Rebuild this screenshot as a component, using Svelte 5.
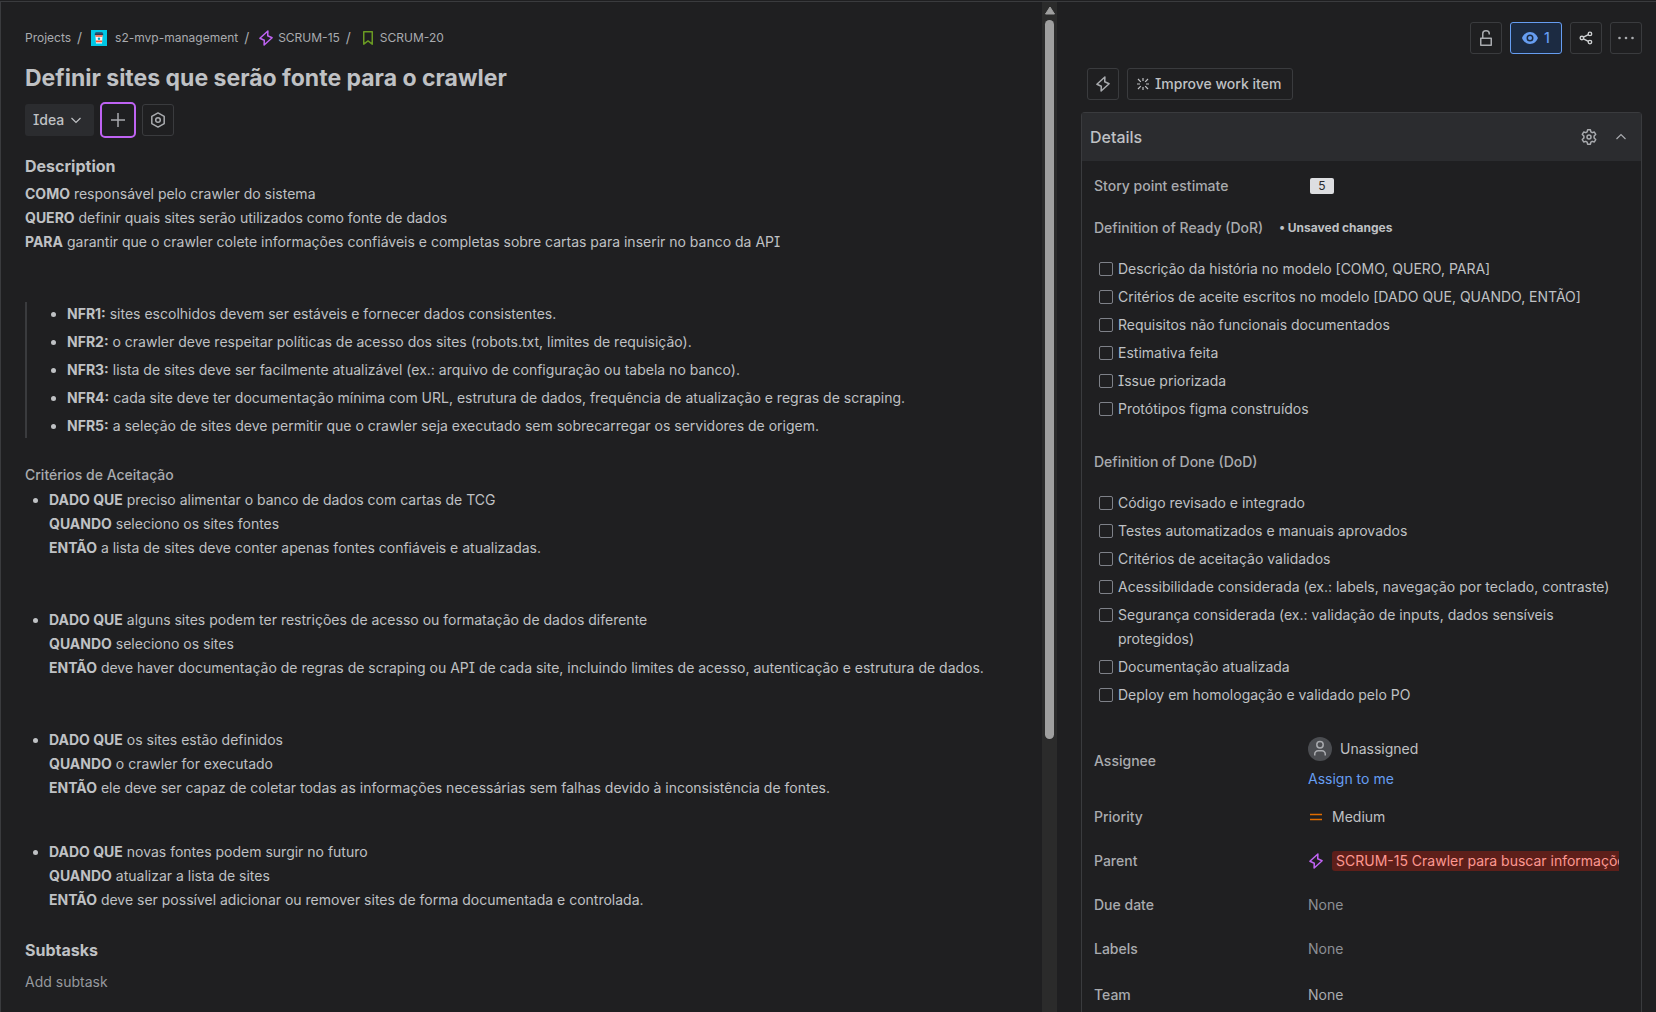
<script>
  const description = [
    ['COMO', 'responsável pelo crawler do sistema'],
    ['QUERO', 'definir quais sites serão utilizados como fonte de dados'],
    ['PARA', 'garantir que o crawler colete informações confiáveis e completas sobre cartas para inserir no banco da API']
  ];

  const requirements = [
    ['NFR1:', 'sites escolhidos devem ser estáveis e fornecer dados consistentes.'],
    ['NFR2:', 'o crawler deve respeitar políticas de acesso dos sites (robots.txt, limites de requisição).'],
    ['NFR3:', 'lista de sites deve ser facilmente atualizável (ex.: arquivo de configuração ou tabela no banco).'],
    ['NFR4:', 'cada site deve ter documentação mínima com URL, estrutura de dados, frequência de atualização e regras de scraping.'],
    ['NFR5:', 'a seleção de sites deve permitir que o crawler seja executado sem sobrecarregar os servidores de origem.']
  ];

  const criteria = [
    ['preciso alimentar o banco de dados com cartas de TCG', 'seleciono os sites fontes', 'a lista de sites deve conter apenas fontes confiáveis e atualizadas.'],
    ['alguns sites podem ter restrições de acesso ou formatação de dados diferente', 'seleciono os sites', 'deve haver documentação de regras de scraping ou API de cada site, incluindo limites de acesso, autenticação e estrutura de dados.'],
    ['os sites estão definidos', 'o crawler for executado', 'ele deve ser capaz de coletar todas as informações necessárias sem falhas devido à inconsistência de fontes.'],
    ['novas fontes podem surgir no futuro', 'atualizar a lista de sites', 'deve ser possível adicionar ou remover sites de forma documentada e controlada.']
  ];

  const ready = [
    'Descrição da história no modelo [COMO, QUERO, PARA]',
    'Critérios de aceite escritos no modelo [DADO QUE, QUANDO, ENTÃO]',
    'Requisitos não funcionais documentados',
    'Estimativa feita',
    'Issue priorizada',
    'Protótipos figma construídos'
  ];

  const done = [
    'Código revisado e integrado',
    'Testes automatizados e manuais aprovados',
    'Critérios de aceitação validados',
    'Acessibilidade considerada (ex.: labels, navegação por teclado, contraste)',
    'Segurança considerada (ex.: validação de inputs, dados sensíveis protegidos)',
    'Documentação atualizada',
    'Deploy em homologação e validado pelo PO'
  ];
</script>

{#snippet bolt()}
  <path d="M9.900 1 1.900 8.300 6.300 10.200 6.100 15 14.100 7.700 9.700 5.800Z" fill="none" stroke="currentColor" stroke-width="1.5" stroke-linejoin="round" />
{/snippet}

{#snippet epic()}
  <svg class="icon epic" viewBox="0 0 16 16" aria-hidden="true">{@render bolt()}</svg>
{/snippet}

{#snippet checklist(items)}
  <ul class="checklist">
    {#each items as item}
      <li>
        <label><input type="checkbox" /><span>{item}</span></label>
      </li>
    {/each}
  </ul>
{/snippet}

<div class="page">
  <main class="work-item">
    <div class="content">
      <nav class="breadcrumbs" aria-label="Breadcrumbs">
        <a href="#projects">Projects</a>
        <span class="slash">/</span>
        <a href="#project" class="project">
          <svg class="avatar" viewBox="0 0 16 16" aria-hidden="true">
            <rect width="16" height="16" fill="#00c7e5" />
            <path d="M4.6 2.200h6.800l.6 1.500H4z" fill="#344563" />
            <path d="M3.800 3.600h8.400v1.600H3.800z" fill="#253858" />
            <path d="M4.400 5.200h7.200L11 13.600H5z" fill="#f4f5f7" />
            <path d="M4.400 5.200h7.200l-.15 1.600h-6.900zM4.800 10.600h6.400l-.15 1.600h-6.100z" fill="#ff5630" />
            <circle cx="8" cy="8.700" r="1.200" fill="#00a3bf" />
          </svg>
          s2-mvp-management
        </a>
        <span class="slash">/</span>
        <a href="#SCRUM-15" class="issue">{@render epic()}SCRUM-15</a>
        <span class="slash">/</span>
        <a href="#SCRUM-20" class="issue">
          <svg class="icon story" viewBox="0 0 16 16" aria-hidden="true">
            <path d="M3.750 1.750h8.500v12.400L8 10.900l-4.250 3.250Z" fill="none" stroke="currentColor" stroke-width="1.5" stroke-linejoin="round" />
          </svg>SCRUM-20</a>
      </nav>

      <h1>Definir sites que serão fonte para o crawler</h1>

      <div class="toolbar">
        <button class="status" type="button">
          Idea
          <svg class="icon" viewBox="0 0 12 12" aria-hidden="true"><path d="m1.500 4 4.500 4.500L10.500 4" fill="none" stroke="currentColor" stroke-width="1.200" /></svg>
        </button>
        <button class="square add" type="button" aria-label="Add">
          <svg class="icon" viewBox="0 0 14 14" aria-hidden="true"><path d="M7 0v14M0 7h14" fill="none" stroke="currentColor" stroke-width="1.500" /></svg>
        </button>
        <button class="square" type="button" aria-label="Apps">
          <svg class="icon large" viewBox="0 0 16 16" aria-hidden="true">
            <path d="M8 .900 14.200 4.400v7.200L8 15.100 1.800 11.600V4.400Z" fill="none" stroke="currentColor" stroke-width="1.500" stroke-linejoin="round" />
            <circle cx="8" cy="8" r="2.300" fill="none" stroke="currentColor" stroke-width="1.500" />
          </svg>
        </button>
      </div>

      <h2>Description</h2>
      <div class="prose">
        {#each description as [lead, text]}
          <p><strong>{lead}</strong> {text}</p>
        {/each}
      </div>

      <blockquote>
        <ul>
          {#each requirements as [lead, text]}
            <li><strong>{lead}</strong> {text}</li>
          {/each}
        </ul>
      </blockquote>

      <h3>Critérios de Aceitação</h3>
      <ul class="criteria">
        {#each criteria as [given, when, then]}
          <li>
            <p><strong>DADO QUE</strong> {given}</p>
            <p><strong>QUANDO</strong> {when}</p>
            <p><strong>ENTÃO</strong> {then}</p>
          </li>
        {/each}
      </ul>

      <h2>Subtasks</h2>
      <button class="subtask" type="button">Add subtask</button>
    </div>

    <div class="scrollbar" aria-hidden="true">
      <svg viewBox="0 0 10 8"><path d="M5 .500 9.500 7.500H.500Z" fill="currentColor" stroke="currentColor" stroke-linejoin="round" /></svg>
      <div class="thumb"></div>
    </div>
  </main>

  <aside>
    <div class="actions">
      <button class="square" type="button" aria-label="Restrictions">
        <svg class="icon large" viewBox="0 0 16 16" aria-hidden="true">
          <path d="M2.750 8.250h10.500v7H2.750zM4.750 8V3.750a3 3 0 0 1 3-3h.5a3 3 0 0 1 3 3V4.500" fill="none" stroke="currentColor" stroke-width="1.500" stroke-linejoin="round" />
        </svg>
      </button>
      <button class="watch" type="button" aria-label="Watchers: 1">
        <svg class="icon large" viewBox="0 0 16 16" aria-hidden="true">
          <path fill-rule="evenodd" d="M8 2C4 2 1.200 5 0 8c1.200 3 4 6 8 6s6.800-3 8-6c-1.200-3-4-6-8-6Zm0 2.500a3.500 3.500 0 1 1 0 7 3.500 3.500 0 0 1 0-7Z" fill="currentColor" />
          <circle cx="8" cy="8" r="2" fill="currentColor" />
        </svg>
        1
      </button>
      <button class="square light" type="button" aria-label="Share">
        <svg class="icon" viewBox="0 0 16 16" aria-hidden="true">
          <g fill="none" stroke="currentColor" stroke-width="1.600">
            <circle cx="3.300" cy="8" r="2" /><circle cx="12.500" cy="3.300" r="2" /><circle cx="12.500" cy="12.700" r="2" />
            <path d="m5.100 7.100 5.600-2.900M5.100 8.900l5.600 2.900" />
          </g>
        </svg>
      </button>
      <button class="square" type="button" aria-label="Actions">
        <svg class="icon large" viewBox="0 0 16 16" aria-hidden="true"><g fill="currentColor"><circle cx="1.500" cy="8" r="1.300" /><circle cx="8" cy="8" r="1.300" /><circle cx="14.500" cy="8" r="1.300" /></g></svg>
      </button>
    </div>

    <div class="quick">
      <button class="square" type="button" aria-label="Automation">
        <svg class="icon large" viewBox="0 0 16 16" aria-hidden="true">{@render bolt()}</svg>
      </button>
      <button class="improve" type="button">
        <svg class="icon small" viewBox="0 0 12 12" aria-hidden="true"><path d="M6 0v3M6 9v3M0 6h3M9 6h3M1 1l2.800 2.800M8.200 8.200 11 11M11 1 8.200 3.800M3.800 8.200 1 11" fill="none" stroke="currentColor" stroke-width="1.200" /></svg>
        Improve work item
      </button>
    </div>

    <section class="details">
      <header>
        <h2>Details</h2>
        <button class="plain" type="button" aria-label="Configure">
          <svg class="icon large" viewBox="0 0 16 16" aria-hidden="true">
            <path d="M6.600.800h2.800l.5 2.100 1.300.750 2.100-.650 1.400 2.450-1.600 1.500v2.100l1.600 1.500-1.400 2.450-2.100-.650-1.300.750-.5 2.100H6.600l-.5-2.100-1.300-.750-2.100.650-1.400-2.450 1.600-1.500v-2.100l-1.600-1.500L2.700 3l2.100.650 1.300-.750Z" fill="none" stroke="currentColor" stroke-width="1.500" stroke-linejoin="round" />
            <circle cx="8" cy="8" r="2" fill="none" stroke="currentColor" stroke-width="1.500" />
          </svg>
        </button>
        <button class="plain" type="button" aria-label="Collapse details">
          <svg class="icon small" viewBox="0 0 12 12" aria-hidden="true"><path d="m1.500 8 4.500-4.500L10.500 8" fill="none" stroke="currentColor" stroke-width="1.200" /></svg>
        </button>
      </header>

      <div class="fields">
        <div class="row first">
          <span class="name">Story point estimate</span>
          <span class="value"><span class="points">5</span></span>
        </div>

        <div class="group-title">
          <h3>Definition of Ready (DoR)</h3>
          <span class="unsaved">• Unsaved changes</span>
        </div>
        {@render checklist(ready)}

        <div class="group-title"><h3>Definition of Done (DoD)</h3></div>
        {@render checklist(done)}

        <div class="row assignee">
          <span class="name">Assignee</span>
          <div class="value stack">
            <span class="person">
              <svg viewBox="0 0 24 24" aria-hidden="true">
                <circle cx="12" cy="12" r="12" fill="#4b4d51" />
                <g fill="none" stroke="#a9abaf" stroke-width="1.500"><circle cx="12" cy="7.800" r="3.200" /><path d="M6.750 18.500V17a3.250 3.250 0 0 1 3.250-3.250h4A3.250 3.250 0 0 1 17.250 17v1.500" /></g>
              </svg>
              Unassigned
            </span>
            <a href="#assign">Assign to me</a>
          </div>
        </div>
        <div class="row">
          <span class="name">Priority</span>
          <span class="value">
            <svg class="icon medium" viewBox="0 0 16 16" aria-hidden="true"><path d="M2 5.500h12M2 10.500h12" stroke="currentColor" stroke-width="1.500" /></svg>
            Medium
          </span>
        </div>
        <div class="row">
          <span class="name">Parent</span>
          <span class="value">{@render epic()}<a class="parent" href="#SCRUM-15">SCRUM-15 Crawler para buscar informações</a></span>
        </div>
        <div class="row"><span class="name">Due date</span><span class="value muted">None</span></div>
        <div class="row"><span class="name">Labels</span><span class="value muted">None</span></div>
        <div class="row tall"><span class="name">Team</span><span class="value soft">None</span></div>
      </div>
    </section>
  </aside>
</div>

<style>
  :global(body) {
    margin: 0;
    background: #1f1f21;
  }

  .page {
    display: grid;
    grid-template-columns: minmax(0, 1057fr) minmax(0, 599fr);
    box-sizing: border-box;
    height: 100vh;
    overflow: hidden;
    padding-top: 1px;
    background: #1f1f21;
    color: #bfc1c4;
    font: 400 14px/24px Inter, "Liberation Sans", sans-serif;
    font-feature-settings: "cv08";
  }

  .page :is(h1, h2, h3, p, ul, blockquote) {
    margin: 0;
    padding: 0;
  }

  h1, h2, strong {
    font-weight: 650;
  }

  a {
    color: inherit;
    text-decoration: none;
  }

  button {
    display: inline-flex;
    align-items: center;
    justify-content: center;
    box-sizing: border-box;
    margin: 0;
    padding: 0;
    border: 0;
    border-radius: 3px;
    background: none;
    color: #a9abaf;
    font: inherit;
    font-feature-settings: inherit;
    font-weight: 500;
  }

  .icon {
    flex: none;
    width: 14px;
    height: 14px;
  }

  .icon.small {
    width: 12px;
    height: 12px;
  }

  .icon.large {
    width: 16px;
    height: 16px;
  }

  .epic {
    width: 16px;
    height: 16px;
    color: #bf63f3;
  }

  .story {
    width: 16px;
    height: 16px;
    color: #6a9a23;
  }

  .work-item {
    display: flex;
    min-width: 0;
    border-top: 1px solid #3a3b3e;
    border-left: 1px solid #3a3b3e;
  }

  .content {
    flex: 1;
    min-width: 0;
    padding: 26px 24px 0;
  }

  .breadcrumbs {
    display: flex;
    align-items: center;
    height: 20px;
    color: #a9abaf;
    font-size: 12px;
    line-height: 20px;
  }

  .breadcrumbs a {
    display: flex;
    align-items: center;
  }

  .slash {
    width: 20px;
    padding-left: 6px;
    box-sizing: border-box;
    font-size: 14px;
  }

  .project {
    gap: 8px;
  }

  .issue {
    gap: 4px;
  }

  .avatar {
    width: 16px;
    height: 16px;
  }

  .page h1 {
    padding-top: 16px;
    font-size: 23px;
    line-height: 28px;
  }

  .toolbar {
    display: flex;
    align-items: center;
    gap: 8px;
    padding: 12px 0 20px;
  }

  .status {
    gap: 6px;
    height: 32px;
    padding: 0 12px 0 8px;
    background: #2b2c2f;
    color: #bfc1c4;
  }

  .status .icon {
    width: 12px;
    height: 12px;
  }

  .square {
    width: 32px;
    height: 32px;
    border: 1px solid #3a3b3e;
  }

  .add {
    outline: 2px solid #bf63f3;
    outline-offset: 0;
    border-color: transparent;
  }

  .content h2 {
    font-size: 16px;
    line-height: 20px;
  }

  .prose {
    padding: 6px 0 48px;
  }

  .page blockquote {
    margin: 0 0 25px;
    border-left: 2px solid #3a3b3e;
  }

  .page blockquote ul {
    padding-left: 40px;
  }

  blockquote li + li {
    margin-top: 4px;
  }

  .content h3 {
    color: #a9abaf;
    font-size: 14px;
    font-weight: 500;
    line-height: 24px;
  }

  .page .criteria {
    padding: 1px 0 28px 24px;
  }

  .criteria li + li {
    margin-top: 48px;
  }

  .criteria li:last-child {
    margin-top: 40px;
  }

  .subtask {
    margin-top: 10px;
    color: #96999e;
    font-weight: 400;
  }

  .scrollbar {
    display: flex;
    flex: none;
    flex-direction: column;
    align-items: center;
    gap: 5px;
    width: 15px;
    padding-top: 4px;
    background: #2b2b2b;
    color: #9f9f9f;
  }

  .scrollbar svg {
    width: 10px;
    height: 9px;
  }

  .thumb {
    width: 9px;
    height: 71%;
    border-radius: 5px;
    background: #9f9f9f;
  }

  aside {
    display: flex;
    flex-direction: column;
    min-width: 0;
    padding: 20px 14px 0 24px;
    border-top: 1px solid #3a3b3e;
  }

  .actions {
    display: flex;
    justify-content: flex-end;
    gap: 8px;
  }

  .light {
    color: #ced0d2;
  }

  .watch {
    gap: 6px;
    width: 52px;
    height: 32px;
    border: 1px solid #669df1;
    background: #1c2b42;
    color: #669df1;
  }

  .quick {
    display: flex;
    gap: 8px;
    padding: 14px 6px 12px;
  }

  .improve {
    gap: 6px;
    height: 32px;
    padding: 0 11px 0 9px;
    border: 1px solid #3a3b3e;
    color: #bfc1c4;
    font-weight: 550;
  }

  .details {
    flex: 1;
    border: 1px solid #3a3b3e;
    border-bottom: 0;
    border-radius: 4px 4px 0 0;
  }

  .details header {
    display: flex;
    align-items: center;
    height: 48px;
    padding: 0 8px;
    background: #2b2c2f;
  }

  .details header h2 {
    flex: 1;
    font-size: 16px;
    font-weight: 500;
    line-height: 20px;
  }

  .plain {
    width: 24px;
    height: 24px;
    margin-left: 8px;
  }

  .fields {
    padding: 0 22px 0 12px;
  }

  .row {
    display: grid;
    grid-template-columns: 214px minmax(0, 1fr);
    align-items: center;
    min-height: 44px;
  }

  .row.first {
    box-sizing: border-box;
    min-height: 48px;
    padding-top: 2px;
  }

  .row.tall {
    min-height: 48px;
  }

  .name,
  .group-title h3 {
    color: #a9abaf;
    font-size: 14px;
    font-weight: 500;
  }

  .value {
    display: flex;
    align-items: center;
    gap: 8px;
    overflow: hidden;
    white-space: nowrap;
  }

  .muted {
    color: #8c8f95;
  }

  .soft {
    color: #a9abaf;
  }

  .points {
    margin-left: 2px;
    width: 24px;
    border-radius: 2px;
    background: #dddee1;
    color: #292a2e;
    font-size: 12px;
    line-height: 16px;
    text-align: center;
  }

  .group-title {
    display: flex;
    align-items: center;
    gap: 16px;
    height: 38px;
  }

  .unsaved {
    font-size: 12px;
    font-weight: 650;
  }

  .page .checklist {
    display: flex;
    flex-direction: column;
    gap: 4px;
    padding: 10px 0 22px 5px;
    list-style: none;
  }

  .checklist label {
    display: flex;
    gap: 5px;
  }

  .checklist input {
    appearance: none;
    flex: none;
    box-sizing: border-box;
    width: 14px;
    height: 14px;
    margin: 5px 0 0;
    border: 1px solid #7e8188;
    border-radius: 2px;
  }

  .row.assignee {
    min-height: 64px;
    padding-bottom: 2px;
  }

  .stack {
    flex-direction: column;
    align-items: flex-start;
    gap: 6px;
    padding-top: 6px;
  }

  .stack a {
    color: #669df1;
  }

  .person {
    display: flex;
    align-items: center;
    gap: 8px;
  }

  .person svg {
    width: 24px;
    height: 24px;
  }

  .medium {
    width: 16px;
    height: 16px;
    color: #e06c00;
  }

  .parent {
    flex: none;
    padding: 0 4px;
    border-radius: 3px;
    background: #5d1f1a;
    color: #fd9891;
    line-height: 20px;
  }
</style>
